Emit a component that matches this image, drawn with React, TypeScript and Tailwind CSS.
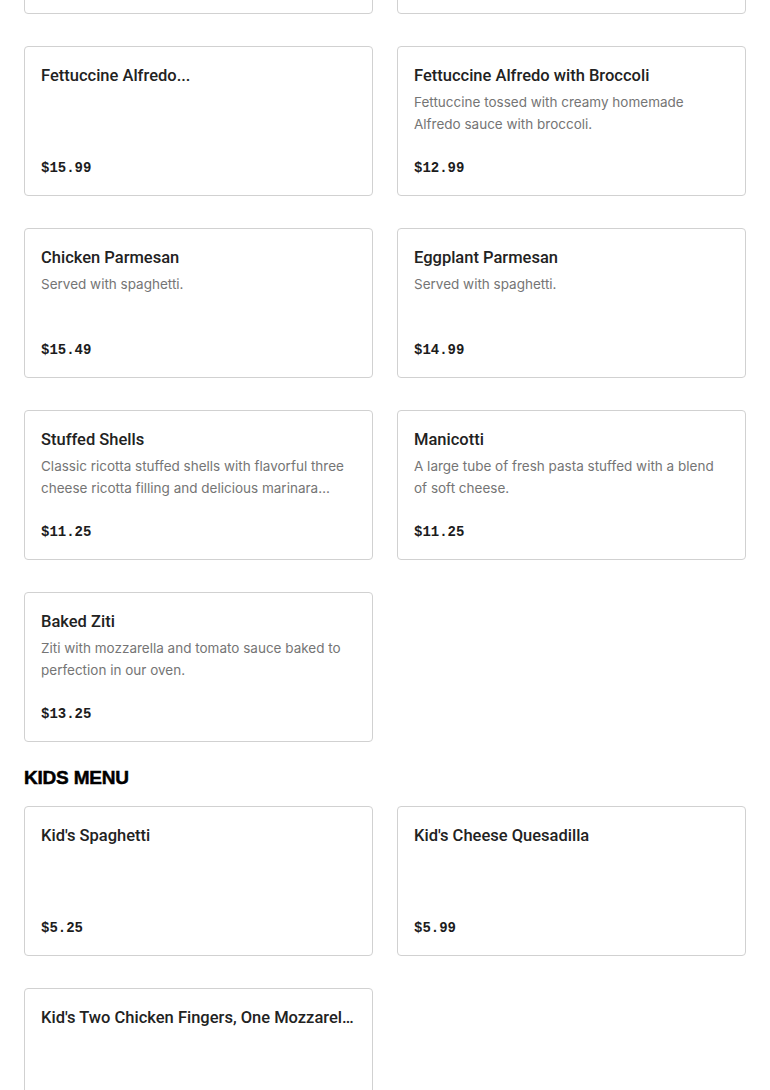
type Item = { name: string; desc?: string; price: string };

const pasta: Item[] = [
  { name: "Spaghetti with Meatballs", desc: "Classic spaghetti with homemade meatballs.", price: "$12.99" },
  { name: "Spaghetti with Sausage", desc: "Spaghetti with Italian sausage.", price: "$12.99" },
  { name: "Fettuccine Alfredo...", price: "$15.99" },
  {
    name: "Fettuccine Alfredo with Broccoli",
    desc: "Fettuccine tossed with creamy homemade Alfredo sauce with broccoli.",
    price: "$12.99",
  },
  { name: "Chicken Parmesan", desc: "Served with spaghetti.", price: "$15.49" },
  { name: "Eggplant Parmesan", desc: "Served with spaghetti.", price: "$14.99" },
  {
    name: "Stuffed Shells",
    desc: "Classic ricotta stuffed shells with flavorful three cheese ricotta filling and delicious marinara sauce.",
    price: "$11.25",
  },
  { name: "Manicotti", desc: "A large tube of fresh pasta stuffed with a blend of soft cheese.", price: "$11.25" },
  { name: "Baked Ziti", desc: "Ziti with mozzarella and tomato sauce baked to perfection in our oven.", price: "$13.25" },
];

const kids: Item[] = [
  { name: "Kid's Spaghetti", price: "$5.25" },
  { name: "Kid's Cheese Quesadilla", price: "$5.99" },
  { name: "Kid's Two Chicken Fingers, One Mozzarella Stick and Fries", price: "$6.99" },
];

const MenuCard = ({ item }: { item: Item }) => (
  <div className="flex h-[150px] flex-col rounded border border-[#d1d1d1] bg-white px-4 pt-[17px] pb-4">
    <h3 className="truncate font-['Roboto','Liberation_Sans',sans-serif] text-[16.5px] leading-6 font-medium text-[#222]">
      {item.name}
    </h3>
    {item.desc && (
      <p className="mt-[3px] line-clamp-2 font-['Inter','Liberation_Sans',sans-serif] text-[13.5px] leading-[22px] text-[#757575]">
        {item.desc}
      </p>
    )}
    <div className="mt-auto font-['Liberation_Mono',monospace] text-[14px] leading-[22px] font-bold text-[#1c1c1c]">
      {item.price}
    </div>
  </div>
);

export default function App() {
  return (
    <div className="min-h-screen overflow-hidden bg-white">
      <div className="mx-6 -mt-[136px]">
        <div className="grid grid-cols-2 gap-x-6 gap-y-8">
          {pasta.map((item) => (
            <MenuCard key={item.name} item={item} />
          ))}
        </div>

        <h2 className="pt-6 pb-4 font-['Liberation_Sans',sans-serif] text-[19px] leading-6 font-black tracking-[-0.2px] text-black [-webkit-text-stroke:0.5px_black]">
          KIDS MENU
        </h2>

        <div className="grid grid-cols-2 gap-x-6 gap-y-8 pb-10">
          {kids.map((item) => (
            <MenuCard key={item.name} item={item} />
          ))}
        </div>
      </div>
    </div>
  );
}
